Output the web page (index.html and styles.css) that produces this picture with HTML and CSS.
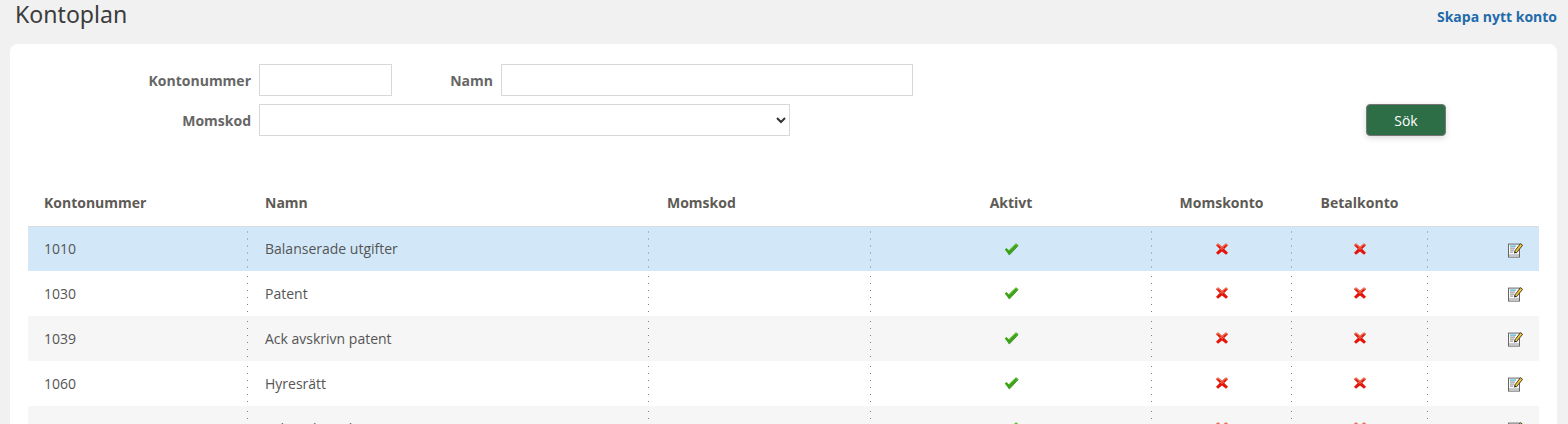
FILE: index.html
```html
<!DOCTYPE html>
<html lang="sv">
<head>
<meta charset="utf-8">
<title>Kontoplan</title>
<link rel="stylesheet" href="styles.css">
</head>
<body>
<svg class="defs" width="0" height="0" aria-hidden="true">
  <symbol id="i-check" viewBox="0 0.6 16 16">
    <path d="M1.8 8 L3.4 6.6 L6 9 L13 2.2 L15.2 3.6 L6.5 13 L5.6 13 Z" fill="#39a313"/>
    <path d="M5.4 12.6 L6.6 13.4 L15.2 4.2" fill="none" stroke="#2c8a18" stroke-width=".9"/>
    <path d="M6.2 8.6 L12.8 2.4 L14.6 3.2" stroke="#7fd24a" stroke-width=".9" fill="none"/>
  </symbol>
  <symbol id="i-cross" viewBox="0 0.6 16 16">
    <path d="M2 3.8 L4 2 L8 5.4 L12 2 L14 3.8 L10.2 7.6 L14 11.4 L12 13.4 L8 10 L4 13.4 L2 11.4 L5.8 7.6 Z" fill="#e5140a"/>
    <path d="M2.6 3.8 L4 2.6 L8 6 L12 2.6 L13.4 3.8" fill="none" stroke="#ec7458" stroke-width="1.3"/>
    <path d="M6 6.5 L8 8 L10 6.5" fill="none" stroke="#ec7458" stroke-width="1"/>
  </symbol>
  <symbol id="i-edit" viewBox="0 0.4 16 16">
    <rect x="1.5" y="2.5" width="11" height="13" fill="#fafafa" stroke="#666"/>
    <rect x="2" y="12.5" width="10" height="2.5" fill="#c6c6c6"/>
    <path d="M3 4.5h6" stroke="#2aa3c6"/>
    <path d="M3 6.5h5M3 8.5h4M3 10.5h3" stroke="#8a8a8a"/>
    <path d="M7.5 9.8 L13.5 2 L15.6 3.7 L9.5 11.2 Z" fill="#f5c52c" stroke="#333" stroke-width=".9"/>
    <path d="M7.5 9.8 L7 12 L9.5 11.2 Z" fill="#111"/>
  </symbol>
</svg>

<header class="top">
  <h1 class="title">Kontoplan</h1>
  <a class="new-link" href="#">Skapa nytt konto</a>
</header>

<main class="card">
  <form class="search">
    <div class="form-row">
      <label class="lbl lbl-first" for="f-nr">Kontonummer</label>
      <input class="field field-nr" id="f-nr" type="text">
      <label class="lbl lbl-second" for="f-namn">Namn</label>
      <input class="field field-namn" id="f-namn" type="text">
    </div>
    <div class="form-row">
      <label class="lbl lbl-first" for="f-moms">Momskod</label>
      <select class="field field-moms" id="f-moms"><option></option></select>
      <button class="btn" type="button">Sök</button>
    </div>
  </form>

  <table class="accounts">
    <colgroup>
      <col class="c1"><col class="c2"><col class="c3"><col class="c4"><col class="c5"><col class="c6"><col class="c7">
    </colgroup>
    <thead>
      <tr><th>Kontonummer</th><th>Namn</th><th class="th-moms">Momskod</th><th class="mid">Aktivt</th><th class="mid">Momskonto</th><th class="mid">Betalkonto</th><th></th></tr>
    </thead>
    <tbody>
      <tr class="selected">
        <td>1010</td><td>Balanserade utgifter</td><td></td>
        <td class="mid"><svg class="ico"><use href="#i-check"/></svg></td>
        <td class="mid"><svg class="ico"><use href="#i-cross"/></svg></td>
        <td class="mid"><svg class="ico"><use href="#i-cross"/></svg></td>
        <td class="end"><svg class="ico"><use href="#i-edit"/></svg></td>
      </tr>
      <tr>
        <td>1030</td><td>Patent</td><td></td>
        <td class="mid"><svg class="ico"><use href="#i-check"/></svg></td>
        <td class="mid"><svg class="ico"><use href="#i-cross"/></svg></td>
        <td class="mid"><svg class="ico"><use href="#i-cross"/></svg></td>
        <td class="end"><svg class="ico"><use href="#i-edit"/></svg></td>
      </tr>
      <tr class="alt">
        <td>1039</td><td>Ack avskrivn patent</td><td></td>
        <td class="mid"><svg class="ico"><use href="#i-check"/></svg></td>
        <td class="mid"><svg class="ico"><use href="#i-cross"/></svg></td>
        <td class="mid"><svg class="ico"><use href="#i-cross"/></svg></td>
        <td class="end"><svg class="ico"><use href="#i-edit"/></svg></td>
      </tr>
      <tr>
        <td>1060</td><td>Hyresrätt</td><td></td>
        <td class="mid"><svg class="ico"><use href="#i-check"/></svg></td>
        <td class="mid"><svg class="ico"><use href="#i-cross"/></svg></td>
        <td class="mid"><svg class="ico"><use href="#i-cross"/></svg></td>
        <td class="end"><svg class="ico"><use href="#i-edit"/></svg></td>
      </tr>
      <tr class="alt">
        <td>1069</td><td>Ack avskrivn hyresrätt</td><td></td>
        <td class="mid"><svg class="ico"><use href="#i-check"/></svg></td>
        <td class="mid"><svg class="ico"><use href="#i-cross"/></svg></td>
        <td class="mid"><svg class="ico"><use href="#i-cross"/></svg></td>
        <td class="end"><svg class="ico"><use href="#i-edit"/></svg></td>
      </tr>
    </tbody>
  </table>
</main>
</body>
</html>
```

FILE: styles.css
```css
* { box-sizing: border-box; }
html, body { height: 424px; overflow: hidden; }
body {
  margin: 0;
  background: #f1f1f1;
  font-family: "Open Sans", "Noto Sans", sans-serif;
  font-size: 14px;
  color: #555;
}
.defs { position: absolute; }

.top {
  height: 44px;
  padding: 0 11px 0 15px;
  display: flex;
  justify-content: space-between;
  align-items: flex-start;
}
.title {
  margin: 0;
  font-family: "Noto Sans", sans-serif;
  font-size: 23.1px;
  font-weight: 400;
  line-height: 28px;
  color: #3c3c3c;
}
.new-link {
  margin-top: 7px;
  font-size: 14px;
  font-weight: 700;
  line-height: 20px;
  color: #1f6bab;
  text-decoration: none;
}

.card {
  margin: 0 11px 0 10px;
  height: 600px;
  padding: 20px 18px;
  background: #fff;
  border-radius: 8px;
}
.search { display: flex; flex-direction: column; gap: 8px; height: 116px; }
.form-row { display: flex; align-items: center; height: 32px; }
.lbl { font-weight: 700; color: #666; text-align: right; }
.lbl-first { width: 223px; margin-right: 8px; }
.lbl-second { width: 101px; margin-right: 8px; }
.field {
  height: 32px;
  border: 1px solid #d8d8d8;
  background: #fff;
  border-radius: 0;
  font: inherit;
  color: #333;
  padding: 0 6px;
}
.field-nr { width: 133px; }
.field-namn { width: 412px; }
.field-moms { width: 531px; }
.btn {
  margin-left: auto;
  margin-right: 93px;
  width: 80px;
  height: 32px;
  background: #2d6e47;
  color: #fff;
  border: 1px solid #777;
  border-radius: 4px;
  font: inherit;
  box-shadow: 0 2px 6px rgba(0,0,0,.15);
}

.accounts { width: 1511px; border-collapse: collapse; table-layout: fixed; }
.c1 { width: 219px; } .c2 { width: 401px; } .c3 { width: 222px; } .c4 { width: 281px; }
.c5 { width: 140px; } .c6 { width: 136px; } .c7 { width: 112px; }
.accounts th {
  height: 46px;
  padding: 0 16px 1px;
  font-weight: 700;
  color: #5e5a55;
  text-align: left;
  border-bottom: 1px solid #dcdcdc;
}
.accounts th:nth-child(n+2), .accounts td:nth-child(n+2) { padding-left: 18px; }
.accounts th.th-moms { padding-left: 19px; }
.accounts td {
  height: 45px;
  padding: 0 16px;
  background-image: linear-gradient(#808080 1px, transparent 1px);
  background-size: 1px 7px;
  background-position: -1px 5px;
  background-repeat: repeat-y;
}
.accounts td:nth-child(n+2) { background-position: 0 5px; }
.accounts th.mid { text-align: center; padding: 0 0 1px 1px; }
.accounts td.mid, .accounts td.end { vertical-align: top; padding-top: 15px; padding-bottom: 0; }
.accounts td.mid { padding-left: 1px; padding-right: 0; }
.accounts td.end { padding-right: 16px; padding-left: 0; }
.selected { background: #d2e8f9; }
.alt { background: #f6f6f6; }
.ico { display: block; width: 16px; height: 16px; margin: 0 auto; }
.end .ico { margin-right: 0; }
```
